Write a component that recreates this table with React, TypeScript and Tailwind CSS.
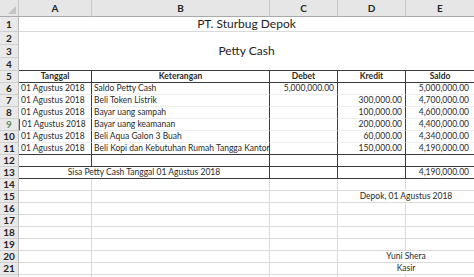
import React from 'react';

// edge styles for the sheet cells
const R = {
  g: 'border-r border-r-[#dadada]',
  k: 'border-r border-r-[#3b3b3b]',
  n: '',
};
const B = {
  g: 'border-b border-b-[#dadada]',
  k: 'border-b border-b-[#3b3b3b]',
  f: 'border-b border-b-[#ededed]',
  n: '',
};
const AL = {
  l: 'justify-start pl-[2px]',
  c: 'justify-center',
  r: 'justify-end pr-[3px]',
  re: 'justify-end pr-[5px]',
};

type CellProps = {
  r?: keyof typeof R;
  b?: keyof typeof B;
  a?: keyof typeof AL;
  className?: string;
  children?: React.ReactNode;
};

const Cell = ({ r = 'g', b = 'g', a = 'l', className = '', children }: CellProps) => (
  <div
    className={`flex items-end whitespace-nowrap leading-[11px] text-[8.5px] text-[#2a2a2a] ${R[r]} ${B[b]} ${AL[a]} ${className}`}
  >
    {children}
  </div>
);

const RowNum = ({ n, active = false, className = '' }: { n?: number; active?: boolean; className?: string }) => (
  <div
    className={`col-start-1 flex items-center justify-center border-r border-b border-r-[#bcbcbc] border-b-[#d0d0d0] bg-[#e9e9e9] text-[10px] font-bold ${
      active ? 'text-[#5f8f6b]' : 'text-[#262626]'
    } ${className}`}
  >
    {n}
  </div>
);

const ColHead = ({ l, last = false }: { l: string; last?: boolean }) => (
  <div
    className={`flex items-center justify-center border-b border-b-[#a9a9a9] bg-[#e6e6e6] text-[10px] font-bold text-[#262626] ${
      last ? '' : 'border-r border-r-[#c8c8c8]'
    }`}
  >
    {l}
  </div>
);

const entries = [
  ['01 Agustus 2018', 'Saldo Petty Cash', '5,000,000.00', '', '5,000,000.00'],
  ['01 Agustus 2018', 'Beli Token Listrik', '', '300,000.00', '4,700,000.00'],
  ['01 Agustus 2018', 'Bayar uang sampah', '', '100,000.00', '4,600,000.00'],
  ['01 Agustus 2018', 'Bayar uang keamanan', '', '200,000.00', '4,400,000.00'],
  ['01 Agustus 2018', 'Beli Aqua Galon 3 Buah', '', '60,000.00', '4,340,000.00'],
  ['01 Agustus 2018', 'Beli Kopi dan Kebutuhan Rumah Tangga Kantor', '', '150,000.00', '4,190,000.00'],
];

export default function App() {
  return (
    <div
      className="h-[277px] w-[474px] overflow-hidden bg-white"
      style={{ fontFamily: 'Lato, "Open Sans", sans-serif' }}
    >
      <div className="grid grid-cols-[19px_73px_178px_68px_68px_68px] grid-rows-[17px_15px_13px_13px_13px_repeat(18,12px)]">
        {/* column headers */}
        <div className="relative border-r border-b border-r-[#c8c8c8] border-b-[#a9a9a9] bg-[#e6e6e6]">
          <svg className="absolute bottom-[2px] right-[2px]" width="8" height="8" viewBox="0 0 8 8">
            <polygon points="8,0 8,8 0,8" fill="#c4c4c4" />
          </svg>
        </div>
        <ColHead l="A" />
        <ColHead l="B" />
        <ColHead l="C" />
        <ColHead l="D" />
        <ColHead l="E" last />

        {/* row 1 */}
        <RowNum n={1} />
        <div className="col-span-5 flex items-end justify-center border-b border-b-[#dadada] pb-[1px] text-[12px] leading-[13px] text-[#222]">
          PT. Sturbug Depok
        </div>

        {/* rows 2-4 merged */}
        <RowNum n={2} />
        <div className="col-start-2 col-span-5 row-span-3 flex items-center justify-center border-b border-b-[#3b3b3b] text-[12px] text-[#222]">
          Petty Cash
        </div>
        <RowNum n={3} />
        <RowNum n={4} />

        {/* row 5 table header */}
        <RowNum n={5} />
        <Cell r="k" b="k" a="c" className="font-bold">Tanggal</Cell>
        <Cell r="k" b="k" a="c" className="font-bold">Keterangan</Cell>
        <Cell r="k" b="k" a="c" className="font-bold">Debet</Cell>
        <Cell r="k" b="k" a="c" className="font-bold">Kredit</Cell>
        <Cell r="n" b="k" a="c" className="font-bold">Saldo</Cell>

        {/* rows 6-11 */}
        {entries.map((row, i) => {
          const last = i === entries.length - 1;
          const bb = last ? 'k' : 'f';
          return (
            <React.Fragment key={i}>
              <RowNum n={6 + i} active={i === 3} />
              <Cell
                r="k"
                b={bb}
                className={i === 3 ? 'border-l border-l-[#217346]' : ''}
              >
                {row[0]}
              </Cell>
              <Cell r="k" b={bb}>{row[1]}</Cell>
              <Cell r="k" b={bb} a="r">{row[2]}</Cell>
              <Cell r="k" b={bb} a="r">{row[3]}</Cell>
              <Cell r="n" b={bb} a="re">{row[4]}</Cell>
            </React.Fragment>
          );
        })}

        {/* row 12 */}
        <RowNum n={12} />
        <Cell r="k" b="k" />
        <Cell r="k" b="k" />
        <Cell r="k" b="k" />
        <Cell r="k" b="k" />
        <Cell r="n" b="k" />

        {/* row 13 */}
        <RowNum n={13} />
        <div className="col-span-2 flex items-end justify-center border-r border-b border-r-[#3b3b3b] border-b-[#3b3b3b] whitespace-nowrap text-[8.5px] leading-[11px] text-[#2a2a2a]">
          Sisa Petty Cash Tanggal 01 Agustus 2018
        </div>
        <Cell r="k" b="k" />
        <Cell r="k" b="k" />
        <Cell r="n" b="k" a="re">4,190,000.00</Cell>

        {/* rows 14-22 */}
        {[14, 15, 16, 17, 18, 19, 20, 21, 22].map((n) => {
          const note = n === 15 ? 'Depok, 01 Agustus 2018' : n === 20 ? 'Yuni Shera' : n === 21 ? 'Kasir' : '';
          return (
            <React.Fragment key={n}>
              <RowNum n={n === 22 ? undefined : n} />
              <Cell />
              <Cell />
              <Cell />
              {note ? (
                <Cell r="n" a="c" className="col-span-2">{note}</Cell>
              ) : (
                <>
                  <Cell />
                  <Cell r="n" />
                </>
              )}
            </React.Fragment>
          );
        })}
      </div>
    </div>
  );
}
